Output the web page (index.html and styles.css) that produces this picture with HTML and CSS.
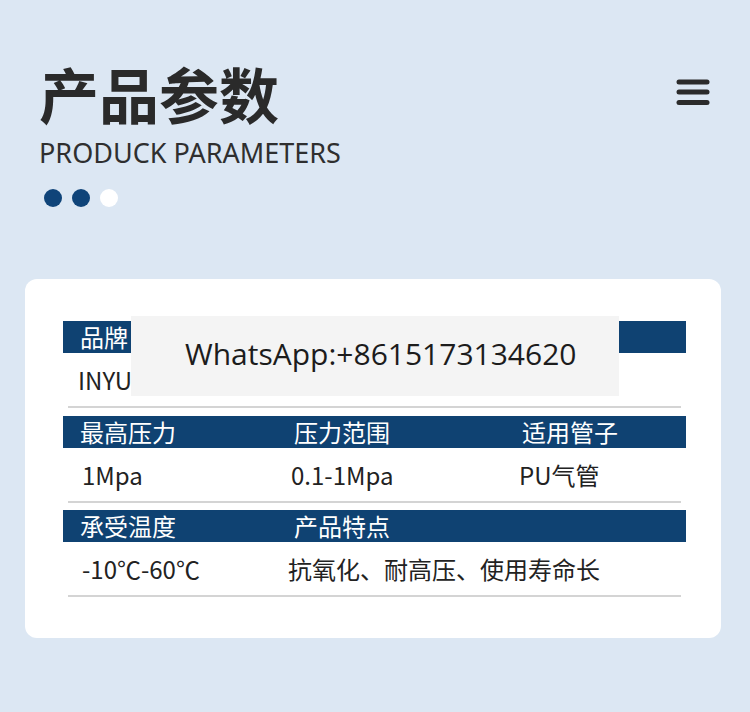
FILE: index.html
```html
<!DOCTYPE html>
<html lang="zh-CN">
<head>
  <meta charset="UTF-8" />
  <title>产品参数</title>
  <meta name="viewport" content="width=device-width, initial-scale=1" />
  <link rel="stylesheet" href="styles.css">
</head>
<body>
  <header class="top">
    <div class="heading">
      <h1>产品参数</h1>
      <p class="subtitle">PRODUCK PARAMETERS</p>
      <div class="dots">
        <span class="dot"></span>
        <span class="dot"></span>
        <span class="dot light"></span>
      </div>
    </div>
    <svg class="menu" width="34" height="28" viewBox="0 0 34 28">
      <g stroke="#2b2b2b" stroke-width="5" stroke-linecap="round">
        <line x1="3" y1="4" x2="31" y2="4" />
        <line x1="3" y1="14" x2="31" y2="14" />
        <line x1="3" y1="24.5" x2="31" y2="24.5" />
      </g>
    </svg>
  </header>

  <section class="card">
    <div class="block">
      <div class="row head">
        <span>品牌</span><span></span><span></span>
      </div>
      <div class="row val">
        <span class="brand">INYU</span><span></span><span></span>
      </div>
    </div>

    <div class="block">
      <div class="row head">
        <span>最高压力</span><span>压力范围</span><span>适用管子</span>
      </div>
      <div class="row val">
        <span>1Mpa</span><span>0.1-1Mpa</span><span>PU气管</span>
      </div>
    </div>

    <div class="block last">
      <div class="row head">
        <span>承受温度</span><span>产品特点</span><span></span>
      </div>
      <div class="row val">
        <span>-10℃-60℃</span><span class="wide">抗氧化、耐高压、使用寿命长</span>
      </div>
    </div>

    <!-- contact label laid over the table -->
    <div class="contact">WhatsApp:+8615173134620</div>
  </section>
</body>
</html>
```

FILE: styles.css
```css
body {
  margin: 0;
  background: #dce7f3;
  font-family: "Noto Sans", "Noto Sans CJK SC", sans-serif;
  width: 750px;
  height: 712px;
  overflow: hidden;
}

.top {
  display: flex;
  justify-content: space-between;
  align-items: flex-start;
  padding: 53px 40px 0 39px;
  height: 223px;
  box-sizing: border-box;
}

h1 {
  margin: 0;
  font-family: "Noto Sans CJK SC", sans-serif;
  font-size: 60px;
  font-weight: 700;
  line-height: 80px;
  color: #2a2a2a;
}

.subtitle {
  margin: 2px 0 0;
  font-family: "Noto Sans", sans-serif;
  font-size: 27px;
  line-height: 36px;
  color: #2f2f2f;
}

.dots {
  display: flex;
  gap: 10px;
  margin-top: 18px;
  padding-left: 5px;
}

.dot {
  width: 18px;
  height: 18px;
  border-radius: 50%;
  background: #0f4479;
}

.dot.light {
  background: #fff;
}

.menu {
  margin-top: 25px;
}

.card {
  position: relative;
  margin: 56px 29px 0 25px;
  background: #fff;
  border-radius: 12px;
  padding: 42px 35px 41px 38px;
}

.block + .block {
  margin-top: 8px;
}

.block.last {
  margin-top: 7px;
}

.row {
  display: grid;
  grid-template-columns: 214px 228px 1fr;
  font-family: "Noto Sans CJK SC", sans-serif;
}

.row.head {
  height: 32px;
  background: #0f4272;
  color: #fff;
  font-size: 24px;
  line-height: 32px;
  padding-left: 17px;
}

.row.val {
  height: 55px;
  margin: 0 5px;
  border-bottom: 2px solid #d4d4d4;
  padding-left: 14px;
  color: #222;
  font-size: 24px;
  line-height: 54px;
  grid-template-columns: 209px 228px 1fr;
  box-sizing: border-box;
}

.row.val .brand {
  margin-left: -4px;
}

.row.val .wide {
  grid-column: span 2;
  margin-left: -3px;
}

.contact {
  position: absolute;
  left: 106px;
  top: 37px;
  width: 488px;
  height: 80px;
  background: #f4f4f4;
  color: #1c1c1c;
  font-family: "Open Sans", sans-serif;
  font-size: 30px;
  line-height: 76px;
  padding-left: 54px;
  box-sizing: border-box;
}
```
